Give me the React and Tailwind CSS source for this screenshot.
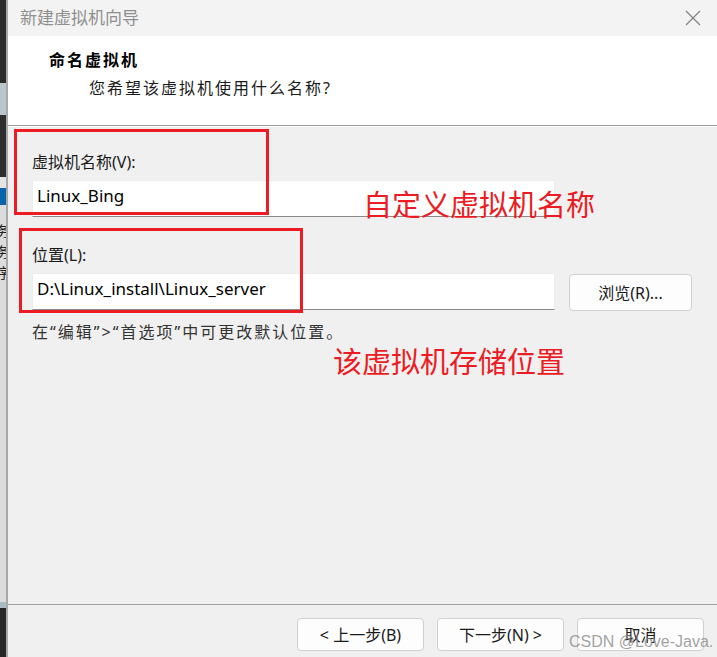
import React from "react";

const cjk = "font-['Segoe_UI','Noto_Sans','Noto_Sans_CJK_SC',sans-serif]";

const StripText = ({ ch }) => (
  <div className="h-[21px] overflow-hidden text-[14px] leading-[21px] text-[#222]">
    <span className="-ml-[4px] inline-block">{ch}</span>
  </div>
);

const LeftStrip = () => (
  <div className="flex w-[6px] shrink-0 flex-col overflow-hidden">
    <div className="h-[83px] bg-[#2b2b2b]" />
    <div className="h-[32px] bg-[#b9c7cd]" />
    <div className="h-[62px] bg-[#2e2e2e]" />
    <div className="h-[11px] bg-[#e4e4e4]" />
    <div className="h-[17px] bg-[#0b63aa]" />
    <div className="flex flex-1 flex-col bg-[#dcdcdc] pt-[15px]">
      <StripText ch="务" />
      <StripText ch="务" />
      <StripText ch="序" />
    </div>
    <div className="h-[6px] bg-[#a9bcc4]" />
    <div className="h-[49px] bg-[#262626]" />
  </div>
);

const Button = ({ children }) => (
  <button className="flex h-[33px] w-[127px] items-center justify-center rounded-[4px] border border-[#d0d0d0] bg-[#fdfdfd] text-[16px] text-[#1a1a1a]">
    {children}
  </button>
);

const Field = ({ value, className = "" }) => (
  <div
    className={`flex h-[37px] w-[523px] items-center border border-[#ececec] border-b-[#8a8a8a] bg-white pb-[6px] pl-[4px] text-[17px] text-black ${className}`}
  >
    {value}
  </div>
);

export default function App() {
  return (
    <div className={`relative flex h-[657px] w-[717px] overflow-hidden bg-[#f0f0f0] ${cjk}`}>
      <LeftStrip />
      <div className="w-[2px] shrink-0 bg-[#a8a8a8]" />
      <div className="flex flex-1 flex-col">
        <div className="flex h-[36px] items-center justify-between bg-[#f3f3f3] pl-[12px] pr-[16px]">
          <span className="text-[17px] text-[#8f8f8f]">新建虚拟机向导</span>
          <svg width="16" height="16" viewBox="0 0 16 16" className="text-[#808080]">
            <path d="M1 1 L15 15 M15 1 L1 15" stroke="currentColor" strokeWidth="1.2" fill="none" />
          </svg>
        </div>
        <div className="flex h-[89px] flex-col bg-white pl-[41px] pt-[13px]">
          <span className="text-[16px] font-bold leading-[22px] tracking-[2px] text-black">命名虚拟机</span>
          <span className="ml-[40px] mt-[6px] text-[16px] leading-[22px] tracking-[2px] text-[#1a1a1a]">
            您希望该虚拟机使用什么名称?
          </span>
        </div>
        <div className="h-[1px] bg-[#a0a0a0]" />
        <div className="h-[1px] bg-white" />
        <div className="flex flex-1 flex-col pl-[24px] pt-[24px]">
          <span className="text-[16px] leading-[22px] text-[#1a1a1a]">虚拟机名称(V):</span>
          <Field value="Linux_Bing" className="mt-[7px]" />
          <span className="mt-[27px] text-[16px] leading-[22px] text-[#1a1a1a]">位置(L):</span>
          <div className="mt-[7px] flex items-start gap-[14px]">
            <Field value="D:\Linux_install\Linux_server" />
            <button className="mt-[1px] flex h-[37px] w-[123px] items-center justify-center rounded-[4px] border border-[#d0d0d0] bg-[#fdfdfd] text-[16px] text-[#1a1a1a]">
              浏览(R)...
            </button>
          </div>
          <span className="mt-[10px] text-[16px] leading-[22px] tracking-[2px] text-[#333]">
            在“编辑”&gt;“首选项”中可更改默认位置。
          </span>
        </div>
        <div className="h-[1px] bg-[#a0a0a0]" />
        <div className="flex h-[52px] items-start justify-end gap-[13px] pr-[13px] pt-[13px]">
          <Button>&lt; 上一步(B)</Button>
          <Button>下一步(N) &gt;</Button>
          <Button>取消</Button>
        </div>
      </div>

      {/* annotations drawn over the dialog */}
      <div className="absolute left-[14px] top-[129px] h-[86px] w-[255px] border-[3px] border-[#ec1c24]" />
      <div className="absolute left-[19px] top-[228px] h-[85px] w-[284px] border-[3px] border-[#ec1c24]" />
      <div className="absolute left-[363px] top-[185px] text-[29px] leading-[36px] text-[#ec1c24] font-['Noto_Sans_CJK_SC',sans-serif]">
        自定义虚拟机名称
      </div>
      <div className="absolute left-[333px] top-[342px] text-[29px] leading-[36px] text-[#ec1c24] font-['Noto_Sans_CJK_SC',sans-serif]">
        该虚拟机存储位置
      </div>
      <div className="absolute left-[569px] top-[631px] text-[16px] leading-[22px] text-[#8a8a8a]/80 font-['Liberation_Sans',sans-serif]">
        CSDN @Love-Java.
      </div>
    </div>
  );
}
